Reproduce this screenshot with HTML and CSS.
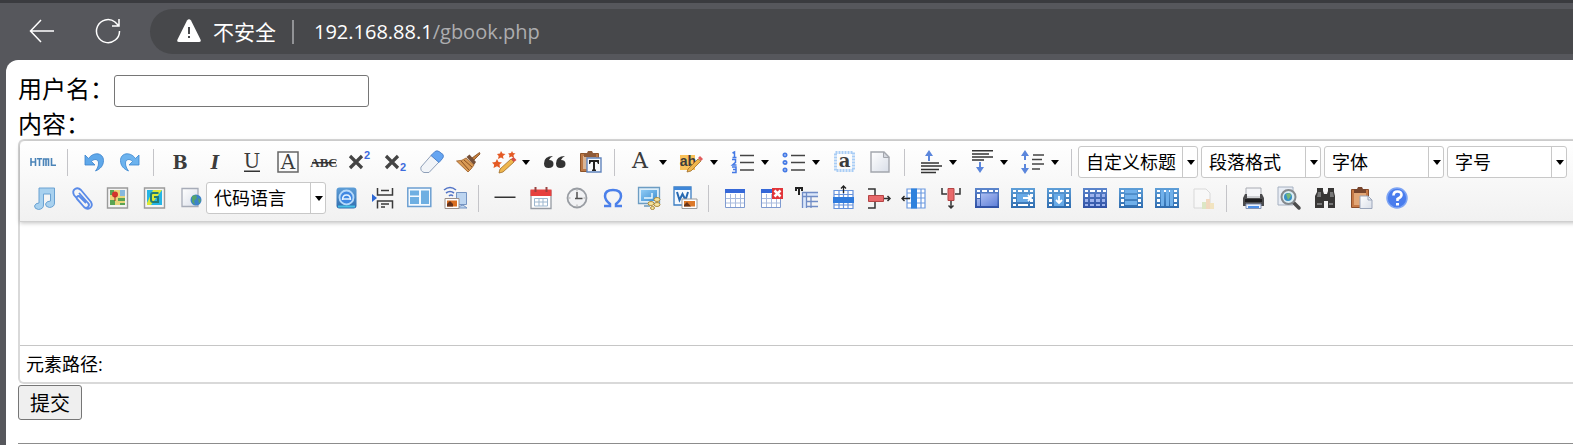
FILE: index.html
```html
<!DOCTYPE html>
<html lang="zh-CN">
<head>
<meta charset="utf-8">
<title>gbook</title>
<link rel="stylesheet" href="styles.css">
</head>
<body>
<svg class="defs" width="0" height="0" aria-hidden="true">
  <defs>
    <linearGradient id="blue" x1="0" y1="0" x2="0" y2="1"><stop offset="0" stop-color="#5f9fd8"/><stop offset="1" stop-color="#2f6cae"/></linearGradient>
    <linearGradient id="sky" x1="0" y1="0" x2="1" y2="1"><stop offset="0" stop-color="#8fcbf5"/><stop offset="1" stop-color="#3f8fd2"/></linearGradient>
    <linearGradient id="violet" x1="0" y1="0" x2="1" y2="1"><stop offset="0" stop-color="#b4c4f4"/><stop offset="1" stop-color="#6080d8"/></linearGradient>
    <linearGradient id="navy" x1="0" y1="0" x2="0" y2="1"><stop offset="0" stop-color="#5c86cc"/><stop offset="1" stop-color="#2f50a4"/></linearGradient>
    <linearGradient id="paper" x1="0" y1="0" x2="1" y2="1"><stop offset="0" stop-color="#ffffff"/><stop offset="1" stop-color="#d9dee8"/></linearGradient>
    <g id="film"><path fill="url(#blue)" d="M0 2h24v20H0z"/><path fill="#fff" d="M2 4h3v2H2zM7 4h4v2H7zM13 4h4v2h-4zM19 4h3v2h-3zM2 8h3v3H2zM2 13h3v3H2zM2 18h3v2H2zM19 8h3v3h-3zM19 13h3v3h-3zM19 18h3v2h-3z"/></g>
    <g id="grid"><path fill="#fff" stroke="#7f9bd0" d="M2.500 3.500h19v18h-19z"/><path stroke="#a9bbdd" fill="none" d="M7.500 8v13M12.500 8v13M17.500 8v13M3 12.500h18M3 17h18"/><path fill="#3568d8" d="M2 3h20v4H2z"/></g>
  </defs>
</svg>

<header class="browser">
  <button class="nav" aria-label="后退"><svg width="26" height="26" viewBox="0 0 26 26"><path d="M25 13H2M12 2 1.500 13 12 24"/></svg></button>
  <button class="nav" aria-label="刷新"><svg width="26" height="26" viewBox="0 0 26 26"><path d="M24.500 13A11.500 11.500 0 1 1 20 4l3.500 3.500M24 1v7h-7"/></svg></button>
  <div class="address">
    <svg width="24" height="24" viewBox="0 0 24 24"><path fill="#fff" d="M10 1.500q2-2.500 4 0l9.500 19q1 2.500-1.500 2.500H2Q-.5 23 .5 20.500z"/><path fill="#47484b" d="M11 8h2v7h-2zM11 17h2v2h-2z"/></svg>
    <span class="insecure">不安全</span>
    <span class="divider"></span>
    <span class="url"><b>192.168.88.1</b>/gbook.php</span>
  </div>
</header>

<main class="page">
  <form onsubmit="return false">
    <div class="field"><label for="user">用户名：</label><input id="user" type="text"></div>
    <div class="field"><label for="content">内容：</label></div>

    <section class="editor">
      <div class="toolbar">
        <div class="row">
          <button type="button" class="tool" title="HTML"><svg viewBox="0 0 24 24"><g fill="none" stroke="#4b84b8" stroke-width="1.600"><path d="M-1 8v8M3.500 8v8M-1 12h4.500M5 8.800h5M7.500 9v7M11.500 16V9h5v7M14 9v7M19.500 8v7.200H24"/></g></svg></button>
          <span class="sep"></span>
          <button type="button" class="tool" title="撤销"><svg viewBox="0 0 24 24"><path fill="#5fa8ea" stroke="#3a82cc" stroke-width=".8" d="M3 5v10h10l-3.500-3.500c3-3.500 7-2 7 1.500 0 3-1 5-3 8 5-2 8-5.500 8-10.500C21.500 3 12 1 6.500 8.500z"/></svg></button>
          <button type="button" class="tool" title="重做"><svg viewBox="0 0 24 24"><path fill="#6db3ee" stroke="#3a86cf" stroke-width=".8" d="M21 5v10H11l3.500-3.500c-3-3.500-7-2-7 1.500 0 3 1 5 3 8-5-2-8-5.500-8-10.500C2.500 3 12 1 17.500 8.500z"/></svg></button>
          <span class="sep"></span>
          <button type="button" class="tool" title="加粗"><svg viewBox="0 0 24 24"><text x="12" y="19" class="serif bold">B</text></svg></button>
          <button type="button" class="tool" title="斜体"><svg viewBox="0 0 24 24"><text x="11" y="19" class="serif bold italic">I</text></svg></button>
          <button type="button" class="tool" title="下划线"><svg viewBox="0 0 24 24"><text x="12" y="18" class="serif">U</text><path fill="#333" d="M4 20.500h16V22H4z"/></svg></button>
          <button type="button" class="tool" title="字符边框"><svg viewBox="0 0 24 24"><path fill="none" stroke="#666" stroke-width="1.500" d="M2 2h20v20H2z"/><text x="12" y="19" class="serif">A</text></svg></button>
          <button type="button" class="tool" title="删除线"><svg viewBox="0 0 24 24"><text x="12" y="17" class="abc">ABC</text><path fill="#333" d="M0 12h24v1.500H0z"/></svg></button>
          <button type="button" class="tool" title="上标"><svg viewBox="0 0 24 24"><path stroke="#444" stroke-width="3.200" d="M2 6l12 12M14 6 2 18"/><text x="19" y="9" class="script">2</text></svg></button>
          <button type="button" class="tool" title="下标"><svg viewBox="0 0 24 24"><path stroke="#444" stroke-width="3.200" d="M2 6l12 12M14 6 2 18"/><text x="19" y="21" class="script">2</text></svg></button>
          <button type="button" class="tool" title="清除格式"><svg viewBox="0 0 24 24"><path fill="#f1f4f8" stroke="#8e9fb8" d="M1 17 11.500 5l7.500 7-10 10.500H4q-4-1.500-3-5.500z"/><path fill="#65a5f2" stroke="#4f83cc" d="M11 5.500 15 1.500q2-1.300 4 0l4 3q1 2-.5 4L19 12.500z"/></svg></button>
          <button type="button" class="tool" title="格式刷"><svg viewBox="0 0 24 24"><path fill="#c5803f" stroke="#7c461b" stroke-width=".8" d="M23.500 2.500 16 8l2 2 6-6z"/><path fill="#755038" d="M10.500 7l3-2.500L20 12l-2 3z"/><path fill="#d99a55" stroke="#9a5c24" stroke-width=".8" d="M10 8l8 7-3 4-3 3L.5 11q6 0 9.500-3z"/><path stroke="#8a5020" d="M5 11l8 9M8 10l8 7"/></svg></button>
          <button type="button" class="tool" title="自动排版"><svg viewBox="0 0 24 24"><path fill="#e45a24" d="M9 1l1.500 2.500 3 .5-2.500 2 .5 3L9 7.500 6 9l.7-3L5 4l3-.5zM20 1l1 2 2.500.5L21.500 5l.5 3-2.500-1.500L17 7.500 17.500 5 16 3.500l3-.5zM5 9l1.500 3 3.500.5-2.500 2 .5 3.500-3-1.800L1.500 18l.7-3.300L0 12.500l3.500-.5z"/><path fill="#efb64d" stroke="#a06d2b" stroke-width=".8" d="M8 19 19 9l3 3-11 10-4 1z"/><path fill="#d64f43" d="M19 9l2.500-2 3 3L22 12z"/></svg></button>
          <span class="caret"></span>
          <button type="button" class="tool" title="引用"><svg viewBox="0 0 24 24"><path fill="#333" d="M10 6Q1 6 1 13.500 1 18 5.500 18q5 0 5-4T6 10q1-2.500 4-4zM22 6q-9 0-9 7.500 0 4.500 4.500 4.500 5 0 5-4T18 10q1-2.500 4-4z"/></svg></button>
          <button type="button" class="tool" title="纯文本粘贴"><svg viewBox="0 0 24 24"><path fill="#bd7845" stroke="#8c5329" d="M1.500 3.500h18v18h-18z"/><path fill="#d9b596" d="M4 6h13v13H4z"/><path fill="#8e5a38" d="M5 3h3l1-2h4l1 2h3v4H5z"/><path fill="#f7f9fc" stroke="#6285bd" stroke-width="1.400" d="M8 8h14v14H8z"/><path fill="#222" d="M10 10h10v4h-1l-1-2h-2v7l1 1v1h-4v-1l1-1v-7h-2l-1 2h-1z"/></svg></button>
          <span class="sep"></span>
          <button type="button" class="tool" title="字体颜色"><svg viewBox="0 0 24 24"><text x="11" y="18" class="large">A</text></svg></button>
          <span class="caret"></span>
          <button type="button" class="tool" title="背景色"><svg viewBox="0 0 24 24"><path fill="#f9c15a" d="M0 5h15v15H0z"/><text x="8" y="16" class="highlight">ab</text><path fill="#efb64d" stroke="#a06d2b" stroke-width=".8" d="M8 19 18 9l3 2-10 10-4 1z"/><path fill="#e25d5d" d="M18 8l2-2 3 3-2 2z"/></svg></button>
          <span class="caret"></span>
          <button type="button" class="tool" title="有序列表"><svg viewBox="0 0 24 24"><path stroke="#444" stroke-width="1.500" d="M9 5.500h14M9 12.500h14M9 20h14"/><g fill="none" stroke="#4479e5" stroke-width="1.500"><path d="M1.500 3 3.500 2v5M1.500 7.500h4M1 9.500h3.500v2.800l-3 2.700h4M1 17h4v5.500H1M2 19.500h3"/></g></svg></button>
          <span class="caret"></span>
          <button type="button" class="tool" title="无序列表"><svg viewBox="0 0 24 24"><path stroke="#444" stroke-width="1.500" d="M9 5.500h14M9 12.500h14M9 20h14"/><g fill="none" stroke="#4479e5" stroke-width="1.800"><circle cx="3" cy="5" r="1.600"/><circle cx="3" cy="12.500" r="1.600"/><circle cx="3" cy="20" r="1.600"/></g></svg></button>
          <span class="caret"></span>
          <button type="button" class="tool" title="全选"><svg viewBox="0 0 24 24"><path fill="none" stroke="#a9cdf5" stroke-width="3" stroke-dasharray="2 1" d="M2.500 2.500h18v18h-18z"/><text x="11.500" y="17" class="serif bold">a</text></svg></button>
          <button type="button" class="tool" title="清空文档"><svg viewBox="0 0 24 24"><path fill="url(#paper)" stroke="#a3a6ad" stroke-width="1.400" d="M2 2h13l5 5v15H2z"/><path fill="#d5d8df" stroke="#a3a6ad" d="M14.500 2v5.500H20z"/></svg></button>
          <span class="sep"></span>
          <button type="button" class="tool" title="段前距"><svg viewBox="0 0 24 24"><path fill="#5b86dc" d="M10 0l4 6h-3v5H9V6H6z"/><path stroke="#333" stroke-width="1.500" d="M2 13h18M2 16h21M2 19.500h18M2 22.500h15"/></svg></button>
          <span class="caret"></span>
          <button type="button" class="tool" title="段后距"><svg viewBox="0 0 24 24"><path stroke="#333" stroke-width="1.500" d="M2 .8h21M2 4h17M2 7h21M2 10h12"/><path fill="#5b86dc" d="M9 12h2v5h3l-4 6-4-6h3z"/></svg></button>
          <span class="caret"></span>
          <button type="button" class="tool" title="行间距"><svg viewBox="0 0 24 24"><path fill="#5b86dc" d="M4 0l4 6H5v4H3V6H0zM3 14h2v4h3l-4 6-4-6h3z"/><path stroke="#444" stroke-width="1.500" d="M12 5h11M11 9.500h10M11 14h12M11 19h8"/></svg></button>
          <span class="caret"></span>
          <span class="sep"></span>
          <div class="combos">
            <span class="combo"><select aria-label="自定义标题"><option>自定义标题</option></select></span>
            <span class="combo"><select aria-label="段落格式"><option>段落格式</option></select></span>
            <span class="combo"><select aria-label="字体"><option>字体</option></select></span>
            <span class="combo"><select aria-label="字号"><option>字号</option></select></span>
          </div>
        </div>

        <div class="row">
          <div class="media">
            <button type="button" class="tool" title="音乐"><svg viewBox="0 0 24 24"><path fill="#a8d1ef" stroke="#6ba2d2" d="M7 2h15.500v15q0 4-5 4.500-4-.5-4-3.500 1-3 5-3V8h-7v11q0 4-5 4.500-4-.5-4-3.500 1-3 4.500-3z"/></svg></button>
            <button type="button" class="tool" title="附件"><svg viewBox="0 0 24 24"><path fill="none" stroke="#5a8be8" stroke-width="1.800" d="M10 7l9 10q2 2 0 4t-4 0L5 9Q3 5 6 3t6 1l10 12q2 4-1 6t-6-1l-7-8q-1-3 2-3l7 7"/></svg></button>
            <button type="button" class="tool" title="地图"><svg viewBox="0 0 24 24"><path fill="#f4f4f4" stroke="#9b9b9b" stroke-width="1.400" d="M1.500 2h20v20h-20z"/><path fill="#e9d57a" d="M4 4h15v15H4z"/><path fill="#5ba353" d="M4 4h4v5H4zM12 12h7v3h-7zM4 14h5v5H4zM14 17h5v2h-5z"/><path fill="#87b8dd" d="M14 4h5v6h-5z"/><circle cx="9" cy="8.500" r="3" fill="#d3342c"/><path stroke="#a62c22" d="M9 10v5"/></svg></button>
            <button type="button" class="tool" title="Google地图"><svg viewBox="0 0 24 24"><path fill="#f4f4f4" stroke="#9b9b9b" stroke-width="1.400" d="M1.500 2h20v20h-20z"/><path fill="#25b5e5" d="M4 4h15v15H4z"/><path fill="#dbe935" d="M10 4h9L8 19H4v-2z"/><path fill="none" stroke="#237b75" stroke-width="2" d="M15.500 7H10q-2 0-2 2v5q0 2 2 2h5v-5h-4"/></svg></button>
            <button type="button" class="tool" title="插入Iframe"><svg viewBox="0 0 24 24"><path fill="url(#paper)" stroke="#a7acb8" stroke-width="1.300" d="M2 2.500h16v18H2z"/><circle cx="16" cy="14" r="5.500" fill="#3b82c9"/><path fill="#55a46b" d="M12 10l4-1 1 3-3 3 1 4-3-3zM18 12l3 2-2 4z"/></svg></button>
          </div>
          <span class="combo"><select aria-label="代码语言"><option>代码语言</option></select></span>
          <button type="button" class="tool" title="百度应用"><svg viewBox="0 0 24 24"><rect x="1.500" y="1.500" width="20" height="21" rx="3" fill="url(#blue)"/><circle cx="11.500" cy="11.500" r="7" fill="#3f88e2" stroke="#b5d9fa" stroke-width="1.800"/><path fill="none" stroke="#e5f3ff" stroke-width="1.500" d="M7.500 14q0-5 4-5t4 5M7 13h9"/><path fill="#49c1e6" d="M3 19.500h17v2H3z"/></svg></button>
          <button type="button" class="tool" title="分页"><svg viewBox="0 0 24 24"><path fill="#2e68d4" d="M1 8l5 4-5 4z"/><path fill="none" stroke="#3a3a3a" stroke-width="1.500" d="M6.500 2v7h15V2M10 4.500h8M6.500 22.500V15h15v7.500M10 18h8M10 21h4"/></svg></button>
          <button type="button" class="tool" title="模板"><svg viewBox="0 0 24 24"><path fill="#f4faff" stroke="#6c9fd1" stroke-width="1.500" d="M.8 2h23v18.500H.8z"/><path fill="#6eafe2" d="M3 4.500h9v5H3zM3 11h9v7H3zM14 4.500h8V18h-8z"/></svg></button>
          <button type="button" class="tool" title="涂鸦"><svg viewBox="0 0 24 24"><path fill="#bdd5f0" stroke="#7594c2" d="M13.500 6.500h10v12h-10zM12 22h12l-4-3z"/><path fill="none" stroke="#5274c6" stroke-width="1.600" d="M1 4q6-5 12 0M3 7q4-3 8 0M6 10q2-2 4 0"/><path fill="#fff" stroke="#9a8f8a" d="M2 12.500h14v10H2z"/><path fill="#da6e20" d="M4 14.500h10v6H4z"/><path fill="#64311a" d="M4 18l3-3 3 3v2.500H4z"/></svg></button>
          <span class="sep"></span>
          <button type="button" class="tool" title="分隔线"><svg viewBox="0 0 24 24"><path fill="#333" d="M1.500 10.500h21V12h-21z"/></svg></button>
          <button type="button" class="tool" title="日期"><svg viewBox="0 0 24 24"><path fill="#fff" stroke="#969ba3" stroke-width="1.300" d="M2 5h20v17.500H2z"/><path fill="#e6413f" d="M1.500 3.500h21V10h-21z"/><path stroke="#9a4240" stroke-width="2" d="M6.500 1v5M17.500 1v5"/><path fill="none" stroke="#9db7cf" d="M5.500 12.500h13v7.500h-13zM5.500 16h13M10 12.500V20M14 12.500V20"/></svg></button>
          <button type="button" class="tool" title="时间"><svg viewBox="0 0 24 24"><circle cx="12" cy="12" r="9.500" fill="#f1f2f4" stroke="#999da3" stroke-width="1.800"/><path fill="none" stroke="#505050" stroke-width="1.500" d="M12 6v7M10 12.500h7.500"/><path stroke="#aaa" d="M12 3.500v2M12 18.500v2M3.500 12h2M18.500 12h2"/></svg></button>
          <button type="button" class="tool" title="特殊字符"><svg viewBox="0 0 24 24"><path fill="none" stroke="#4b80ea" stroke-width="2.500" d="M3 20h6v-2Q4 14 4 10q0-6 8-6t8 6q0 4-5 8v2h6"/></svg></button>
          <button type="button" class="tool" title="截屏"><svg viewBox="0 0 24 24"><path fill="#dceefa" stroke="#6d9dc3" stroke-width="1.300" d="M1.500 1.500h21v16h-21z"/><path fill="url(#sky)" d="M4 4h16v11H4z"/><path fill="none" stroke="#e9f7ff" stroke-width="1.500" d="M7 12h8V7"/><path stroke="#8cafc8" stroke-width="2" d="M7 20h6"/><g fill="#f6e49f" stroke="#ae8d40"><ellipse cx="20" cy="13.500" rx="3" ry="2"/><ellipse cx="14" cy="17.500" rx="3" ry="2"/><ellipse cx="20" cy="18.500" rx="3" ry="2"/><ellipse cx="15.500" cy="22" rx="2" ry="1.500"/></g></svg></button>
          <button type="button" class="tool" title="Word图片"><svg viewBox="0 0 24 24"><path fill="#f6faff" stroke="#3b7dc2" stroke-width="1.300" d="M1 1h17v18H1z"/><path fill="#3f87d8" d="M1 1h17v3H1z"/><path fill="none" stroke="#2769b2" stroke-width="2" d="M4 6l2.500 8L9.500 8l3 6L15 6"/><path fill="#fff" stroke="#9b9b9b" d="M9 13h15v9.500H9z"/><path fill="#dc7828" d="M11 15h11v5.500H11z"/><path fill="#693417" d="M11 19l3-3 4 4.500h-7z"/></svg></button>
          <span class="sep"></span>
          <button type="button" class="tool" title="插入表格"><svg viewBox="0 0 24 24"><use href="#grid"/></svg></button>
          <button type="button" class="tool" title="删除表格"><svg viewBox="0 0 24 24"><use href="#grid"/><path fill="#e1353a" d="M13 2h11v11H13z"/><path stroke="#fff" stroke-width="2.500" d="M15.500 4.500l6 6M21.500 4.500l-6 6"/></svg></button>
          <button type="button" class="tool" title="表格前插入行"><svg viewBox="0 0 24 24"><path fill="none" stroke="#222" stroke-width="2" d="M1 5V2h6v3M4 2v7"/><path fill="#dbe7fa" d="M8 7h15v4H11v11H8z"/><path fill="none" stroke="#708cc5" stroke-width="1.300" d="M23 6.500H7.500V22M23 10.500H7.500M11.500 7v15M16 11v11M12 15.500h11M12 20.500h11"/></svg></button>
          <button type="button" class="tool" title="前插入行"><svg viewBox="0 0 24 24"><path fill="#fff" stroke="#6692db" stroke-width="1.200" d="M3 4.500h19v18H3zM8 4.500v18M12.500 4.500v18M17 4.500v18M3 8.500h19M3 19h19"/><path fill="#2f7bdd" d="M2 11h21v6H2z"/><path stroke="#222" fill="none" stroke-width="1.300" d="M12.500 7V0M10 2.500 12.500 0 15 2.500"/></svg></button>
          <button type="button" class="tool" title="删除行"><svg viewBox="0 0 24 24"><path fill="#e8696b" stroke="#b54545" d="M1.500 9.500h15v6h-15z"/><path fill="none" stroke="#333" stroke-width="1.500" d="M1 3h7v6M1 22h7v-6M17 12.500h6M20.500 10l2.500 2.500-2.500 2.500"/></svg></button>
          <button type="button" class="tool" title="前插入列"><svg viewBox="0 0 24 24"><path fill="#fff" stroke="#6c99df" stroke-width="1.200" d="M4 3h18v19H4zM18 3v19M4 7h18M4 12h18M4 17h18"/><path fill="#2f82dd" d="M8 2.500h6v20H8z"/><path fill="none" stroke="#222" stroke-width="1.300" d="M7 12.500H-1M1.500 10-1 12.500 1.500 15"/></svg></button>
          <button type="button" class="tool" title="删除列"><svg viewBox="0 0 24 24"><path fill="#e8696b" stroke="#b54545" d="M9 2.500h6v12H9z"/><path fill="none" stroke="#333" stroke-width="1.500" d="M3 2v6h5M21 2v6h-5M12 15v7M9.500 19.500 12 22l2.500-2.500"/></svg></button>
          <button type="button" class="tool" title="合并多个单元格"><svg viewBox="0 0 24 24"><path fill="url(#navy)" d="M0 2h24v20H0z"/><path fill="#fff" d="M2 4h3v2H2zM7 4h5v2H7zM14 4h4v2h-4zM20 4h3v2h-3zM2 8h3v4H2z"/><path fill="url(#violet)" d="M6 7.500h16.500V20H6zM2 13h3v7H2z"/></svg></button>
          <button type="button" class="tool" title="右合并单元格"><svg viewBox="0 0 24 24"><use href="#film"/><path fill="#68aae7" d="M6 8h12v8H6z"/><path fill="none" stroke="#fff" stroke-width="1.800" d="M12 12h8M17 9l3 3-3 3M7 19h10"/></svg></button>
          <button type="button" class="tool" title="下合并单元格"><svg viewBox="0 0 24 24"><use href="#film"/><path fill="#68aae7" d="M7 8h10v12H7z"/><path fill="none" stroke="#fff" stroke-width="1.800" d="M12 10v7M9 14l3 3 3-3"/></svg></button>
          <button type="button" class="tool" title="完全拆分单元格"><svg viewBox="0 0 24 24"><path fill="url(#navy)" d="M0 2h24v20H0z"/><path fill="#fff" d="M2 4h3v2H2zM7 4h5v2H7zM14 4h4v2h-4zM20 4h3v2h-3zM2 8h3v3H2z"/><path fill="#9eb3ed" d="M7 8h4v3H7zM13 8h4v3h-4zM19 8h3v3h-3zM2 13h3v3H2zM7 13h4v3H7zM13 13h4v3h-4zM19 13h3v3h-3zM2 18h3v2H2zM7 18h4v2H7zM13 18h4v2h-4zM19 18h3v2h-3z"/></svg></button>
          <button type="button" class="tool" title="拆分成行"><svg viewBox="0 0 24 24"><use href="#film"/><path fill="#70b0ea" d="M6 4h12v3H6zM6 9h12v4H6zM6 15h12v4H6z"/></svg></button>
          <button type="button" class="tool" title="拆分成列"><svg viewBox="0 0 24 24"><use href="#film"/><path fill="#70b0ea" d="M6 4h3v16H6zM11 4h3v16h-3zM15 4h3v16h-3z"/></svg></button>
          <button type="button" class="tool faded" title="图表"><svg viewBox="0 0 24 24"><path fill="#fff" stroke="#999" d="M3 3h12l4 4v15H3z"/><path fill="#a8c95a" d="M11 16h4v7h-4z"/><path fill="#ec9a48" d="M15 13h4v10h-4z"/><path fill="#efc14c" d="M19 17h4v6h-4z"/></svg></button>
          <span class="sep"></span>
          <button type="button" class="tool" title="打印"><svg viewBox="0 0 24 24"><path fill="#f4f5f8" stroke="#a8abb2" d="M5 2h15v9H5z"/><path fill="#4b4b4d" d="M4 8h2v4h13V8h2l2 4v8H2v-8z"/><path fill="#1e1e20" d="M4 13h17v3H4z"/><path fill="#eef4ff" stroke="#8293b4" d="M5 18h15v4.500H5z"/><path fill="#4e91ea" d="M7 20h11v2H7z"/></svg></button>
          <button type="button" class="tool" title="预览"><svg viewBox="0 0 24 24"><path fill="#e8edf5" stroke="#a5b0c0" d="M1 1h15v18H1z"/><path stroke="#4c4c4c" stroke-width="3.500" stroke-linecap="round" d="M16 16l6 6"/><circle cx="11.500" cy="11" r="7" fill="#d9edf4" stroke="#85898d" stroke-width="2"/><circle cx="11" cy="11" r="4" fill="#388fc5"/><path fill="#77b778" d="M9 8l4-1 1 3-3 4z"/></svg></button>
          <button type="button" class="tool" title="查询替换"><svg viewBox="0 0 24 24"><path fill="#383736" d="M4 2h6v3l1 3h3l1-3V2h6v4l1 4v12h-7v-7h-4v7H2V10l2-4z"/><path fill="#777" d="M5 6h3v5H4zM17 6h3l1 5h-4zM4 17h5v2H4zM16 17h4v2h-4z"/></svg></button>
          <button type="button" class="tool" title="粘贴"><svg viewBox="0 0 24 24"><path fill="#c67946" stroke="#8c4d29" d="M2.500 3.500h17v18h-17z"/><path fill="#e2a676" d="M5 7h12v12H5z"/><path fill="#78452c" d="M5 3h3l1-2h4l1 2h3v4H5z"/><path fill="url(#paper)" stroke="#9ba6bb" d="M11 10h8l4 4v8.500H11z"/><path fill="none" stroke="#9ba6bb" d="M19 10v4h4"/></svg></button>
          <button type="button" class="tool" title="帮助"><svg viewBox="0 0 24 24"><circle cx="12" cy="12" r="10" fill="#4a7ded" stroke="#7ea5f4" stroke-width="1.500"/><path fill="none" stroke="#fff" stroke-width="2.600" d="M8.500 9.500q0-4 4-4t4 3.500q0 2-4 4v2"/><path fill="#fff" d="M11 17h3v2.500h-3z"/></svg></button>
        </div>
      </div>
      <textarea id="content" class="canvas"></textarea>
      <div class="path">元素路径:</div>
    </section>
    <button type="submit" class="submit">提交</button>
  </form>
  <hr>
</main>
</body>
</html>
```
FILE: styles.css
```css
* { box-sizing: border-box; }

body {
  margin: 0;
  overflow-x: hidden;
  background: #56575c;
  color: #000;
  font-family: "Open Sans", "Noto Sans CJK SC", sans-serif;
}

button, input, select, textarea { font-family: inherit; }

.defs { display: block; }

.browser {
  display: flex;
  align-items: center;
  height: 60px;
  padding: 3px 0 0 29px;
  border-top: 3px solid #3a3b3f;
  gap: 40px;
}

.nav {
  flex: none;
  width: 26px;
  height: 26px;
  margin-bottom: 4px;
  padding: 0;
  border: 0;
  background: none;
}

.nav svg { display: block; fill: none; stroke: #fff; stroke-width: 1.5; }

.address {
  display: flex;
  flex: 1;
  align-items: center;
  height: 45px;
  margin: 0 0 3px -11px;
  padding-left: 27px;
  border-radius: 23px 0 0 23px;
  background: #47484b;
  color: #adadaf;
}

.address svg { flex: none; margin-bottom: 2px; }

.insecure { margin-left: 12px; color: #fff; font-size: 21px; line-height: 30px; }
.divider { width: 2px; height: 24px; margin: 0 20px 0 16px; background: #929396; }
.url { font-size: 20px; line-height: 30px; }
.url b { color: #fff; font-weight: 400; }

.page {
  min-height: 385px;
  margin-left: 6px;
  padding: 13px 0 0 12px;
  border-top-left-radius: 12px;
  background: #fff;
}

.field {
  display: flex;
  align-items: center;
  height: 35px;
  font-size: 24px;
  line-height: 35px;
}

.field + .field { height: 31px; line-height: 31px; }

.field label { height: 100%; line-height: 32px; }

.field input {
  width: 255px;
  height: 32px;
  border: 1px solid #767676;
  border-radius: 3px;
  background: #fff;
  font-size: 20px;
}

.editor {
  margin-right: -12px;
  border: 2px solid #d9d9d9;
  border-right: 0;
  border-radius: 6px;
}

.toolbar {
  padding: 3px 0 5px 6px;
  border-bottom: 1px solid #cfcfcf;
  border-radius: 6px 0 0 0;
  background: linear-gradient(#fff, #f1f1f1);
  box-shadow: 0 1px 4px rgba(0, 0, 0, .25);
}

.row { display: flex; align-items: center; height: 36px; }

.tool {
  flex: none;
  width: 36px;
  height: 36px;
  padding: 6px;
  border: 0;
  background: none;
}

.tool svg { display: block; width: 24px; height: 24px; overflow: visible; }
.faded { opacity: .3; }

.sep { flex: none; width: 14px; height: 27px; }
.sep::before { content: ""; display: block; width: 1px; height: 27px; margin-left: 5px; background: #c4c4c8; }

.caret { flex: none; width: 15px; }
.caret::before { content: ""; display: block; width: 0; border: 4px solid transparent; border-top: 5px solid #000; border-bottom: 0; }

.media { display: flex; gap: 1px; margin-right: -4px; }
.media + .combo { margin-right: 3px; }
.combos { display: flex; gap: 3px; margin-left: -2px; }

.combo { position: relative; flex: none; width: 120px; height: 32px; }

.combo select {
  width: 100%;
  height: 100%;
  padding: 0 0 0 7px;
  border: 1px solid #c8c8c8;
  border-radius: 3px;
  background: linear-gradient(#c8c8c8, #c8c8c8) right 14px top / 1px 100% no-repeat #fff;
  color: #000;
  font-size: 18px;
  appearance: none;
}

.combo::after {
  content: "";
  position: absolute;
  top: 14px;
  right: 3px;
  border: 4px solid transparent;
  border-top: 5px solid #000;
  border-bottom: 0;
  pointer-events: none;
}

.canvas {
  display: block;
  width: 100%;
  height: 123px;
  padding: 8px;
  border: 0;
  outline: 0;
  resize: none;
  background: none;
  font-size: 18px;
}

.path {
  height: 37px;
  padding-left: 6px;
  border-top: 1px solid #c6c6c6;
  font-size: 18px;
  line-height: 37px;
}

.submit {
  display: block;
  width: 64px;
  height: 35px;
  margin-top: 1px;
  padding: 0;
  border: 1px solid #767676;
  border-radius: 3px;
  background: #efefef;
  color: #000;
  font-size: 20px;
}

hr { margin: 23px 0 0; border: 0; border-top: 1px solid #8c8c8c; }

.tool text { fill: #3c3c3c; text-anchor: middle; font-family: "DejaVu Serif", serif; font-size: 20px; }
.tool .bold { font-weight: 700; font-size: 18px; }
.tool .italic { font-style: italic; }
.tool .large { font-size: 22px; }
.tool .abc { font-family: "Liberation Serif", serif; font-size: 13px; font-weight: 700; }
.tool .script { fill: #3d6bdc; font-family: "Liberation Sans", sans-serif; font-size: 11px; font-weight: 700; }
.tool .highlight { font-family: "Liberation Sans", sans-serif; font-size: 14px; font-weight: 700; }
```
